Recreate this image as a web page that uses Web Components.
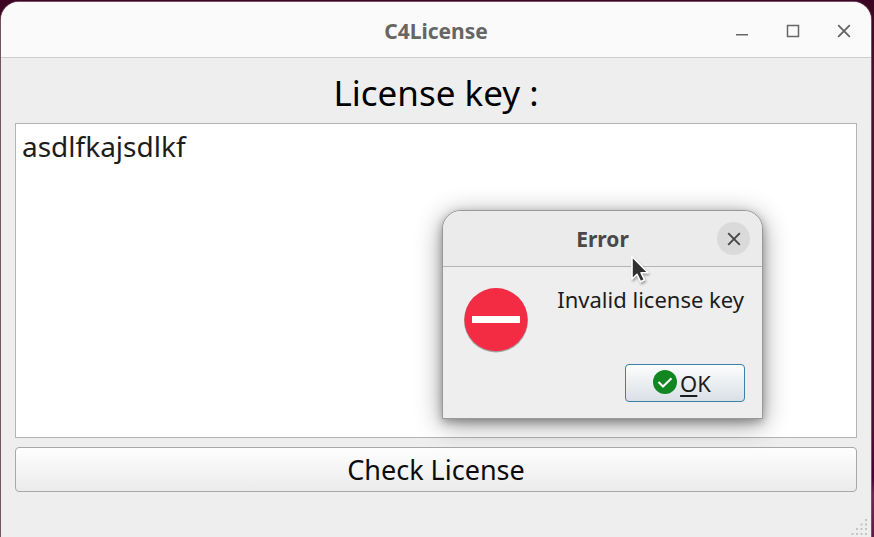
<!DOCTYPE html>
<html lang="en">
<head>
<meta charset="utf-8">
<title>C4License</title>
<style>
html, body { height: 100%; }
body {
  margin: 0;
  overflow: hidden;
  font-family: "Noto Sans", "Open Sans", sans-serif;
  color: #1c1c1c;
  background: linear-gradient(#3c0524, #4b1230 15%, #4b1035 80%, #47003c 89%, #6c2858 92%, #5c1a4a);
}
</style>
</head>
<body>
<license-app></license-app>

<template id="app-tpl">
  <style>
    :host { display: block; box-sizing: border-box; height: 100vh; padding: 2px 3px 0 1px; position: relative; }
    app-dialog { position: absolute; left: 442px; top: 210px; width: 321px; }
    mouse-pointer { position: absolute; left: 628px; top: 254px; }
  </style>
  <app-window label="C4License"><license-form></license-form></app-window>
  <app-dialog label="Error">Invalid license key</app-dialog>
  <mouse-pointer></mouse-pointer>
</template>

<template id="window-tpl">
  <style>
    :host {
      display: flex; flex-direction: column; box-sizing: border-box; height: 100%;
      background: #eee; border-radius: 18px 18px 0 0; overflow: hidden;
      box-shadow: 0 0 0 1px #765063;
    }
    header {
      display: grid; grid-template-columns: 1fr auto 1fr; align-items: center;
      box-sizing: border-box; height: 56px; flex: none; padding: 2px 8px 0 8px;
      background: #fafafa; border-bottom: 1px solid #cdcdcd; color: #666;
    }
    h1 { grid-column: 2; margin: 0; font-size: 21px; line-height: 28px; font-weight: 700; }
    nav { display: flex; justify-content: flex-end; gap: 13px; }
    button { width: 38px; height: 38px; padding: 0; border: 0; background: none; color: inherit; display: grid; place-items: center; }
    svg { display: block; }
    ::slotted(*) { flex: 1; min-height: 0; }
  </style>
  <header>
    <h1></h1>
    <nav aria-label="Window controls">
      <button aria-label="Minimize"><svg width="14" height="14" viewBox="0 0 14 14" fill="none" stroke="currentColor" stroke-width="1.6"><path d="M1 10.700h12"/></svg></button>
      <button aria-label="Maximize"><svg width="14" height="14" viewBox="0 0 14 14" fill="none" stroke="currentColor" stroke-width="1.5"><path d="M1.500 1.500h11v11h-11z"/></svg></button>
      <button aria-label="Close"><svg width="14" height="14" viewBox="0 0 14 14" fill="none" stroke="currentColor" stroke-width="1.9"><path d="M1.200 1.200l11.600 11.600M12.800 1.200L1.200 12.800"/></svg></button>
    </nav>
  </header>
  <slot></slot>
</template>

<template id="form-tpl">
  <style>
    :host { display: flex; flex-direction: column; box-sizing: border-box; padding: 10px 14px 0; }
    label { font-size: 35px; line-height: 50px; margin-bottom: 5px; text-align: center; color: #000; }
    textarea {
      flex: 1; min-height: 0; box-sizing: border-box; width: 100%; margin: 0; padding: 4px 6px; resize: none; outline: none;
      border: 1px solid #b4b4b4; background: #fff; color: inherit;
      font-family: inherit; font-size: 28px; line-height: 36px;
    }
    button {
      box-sizing: border-box; height: 45px; flex: none; margin-top: 9px; padding: 0; color: #0c0c0c;
      border: 1px solid #a8a8a8; border-radius: 4px; background: linear-gradient(#fefefe, #ebebeb);
      font-family: inherit; font-size: 27px; line-height: 36px;
    }
    footer { flex: none; height: 45px; display: flex; justify-content: flex-end; align-items: flex-end; margin-right: -12px; }
    svg { display: block; }
  </style>
  <label for="key">License key :</label>
  <textarea id="key" spellcheck="false">asdlfkajsdlkf</textarea>
  <button type="button">Check License</button>
  <footer><svg width="18" height="18" viewBox="0 0 18 18" fill="#c4c4c4" aria-hidden="true">
    <path d="M14 0h2v2h-2zM9.500 4.500h2v2h-2zM14 4.500h2v2h-2zM5 9h2v2H5zM9.500 9h2v2h-2zM14 9h2v2h-2zM.5 14h2v2h-2zM5 14h2v2H5zM9.500 14h2v2h-2zM14 14h2v2h-2z"/></svg></footer>
</template>

<template id="dialog-tpl">
  <style>
    :host {
      display: block; box-sizing: border-box; border: 1px solid #999; border-radius: 19px 19px 0 0;
      background: #eee; box-shadow: 0 3px 8px rgba(0,0,0,.28), 0 5px 26px rgba(0,0,0,.42);
    }
    header {
      display: grid; grid-template-columns: 1fr auto 1fr; align-items: center; box-sizing: border-box; height: 56px;
      padding: 0 12px; border-bottom: 1px solid #b4b4b4; border-radius: 18px 18px 0 0; background: #ebebeb; color: #484848;
    }
    h2 { grid-column: 2; margin: 0; font-size: 21px; line-height: 28px; font-weight: 700; }
    .close { justify-self: end; width: 33px; height: 33px; padding: 0; border: 0; border-radius: 50%; background: #dadada; color: #484848; display: grid; place-items: center; }
    svg { display: block; }
    .message { display: flex; justify-content: space-between; align-items: flex-start; padding: 20px 18px 0 20px; }
    p { margin: 0; font-size: 22px; line-height: 24px; }
    .actions { display: flex; justify-content: flex-end; padding: 11px 17px 16px; }
    .ok {
      display: flex; justify-content: center; align-items: center; gap: 3px; box-sizing: border-box; width: 120px; height: 38px; padding: 0 6px 0 0;
      border: 1px solid #3a80ab; border-radius: 4px; background: linear-gradient(#fcfdfd, #d9e0e5); color: inherit;
      font-family: inherit; font-size: 22px; line-height: 30px;
    }
    u { text-decoration-thickness: 2px; text-underline-offset: 3px; }
  </style>
  <header>
    <h2></h2>
    <button class="close" aria-label="Close"><svg width="14" height="14" viewBox="0 0 14 14" fill="none" stroke="currentColor" stroke-width="1.9"><path d="M1.200 1.200l11.600 11.600M12.800 1.200L1.200 12.800"/></svg></button>
  </header>
  <div class="message">
    <svg width="66" height="66" viewBox="0 0 66 66" aria-hidden="true"><circle cx="33" cy="33.500" r="32" fill="#a4a4a4"/><circle cx="33" cy="32.600" r="31.600" fill="#f42c43"/><path fill="#fff" d="M9 29h48v7H9z"/></svg>
    <p><slot></slot></p>
  </div>
  <div class="actions">
    <button class="ok" type="button"><svg width="24" height="26" viewBox="0 0 24 26" aria-hidden="true"><circle cx="12" cy="12" r="12" fill="#128621"/><path d="M5.500 12l4.500 4.500 8.500-8.300" fill="none" stroke="#fff" stroke-width="2.100"/></svg><span><u>O</u>K</span></button>
  </div>
</template>

<template id="pointer-tpl">
  <style>
    :host { display: block; pointer-events: none; }
    svg { display: block; filter: drop-shadow(1px 2px 1px rgba(0,0,0,.3)); }
  </style>
  <svg width="24" height="32" viewBox="0 0 24 32" aria-hidden="true"><path d="M4 2.500V25l5-4.600 3.600 7.400 4-2-3.500-7H20z" fill="#303030" stroke="#fff" stroke-width="1.600" stroke-linejoin="round"/></svg>
</template>

<script>
class TemplateElement extends HTMLElement {
  constructor() {
    super();
    const tpl = document.getElementById(this.constructor.template);
    this.attachShadow({ mode: 'open' }).append(tpl.content.cloneNode(true));
  }
  connectedCallback() {
    const heading = this.shadowRoot.querySelector('h1, h2');
    if (heading) heading.textContent = this.getAttribute('label');
  }
}
class AppWindow extends TemplateElement { static template = 'window-tpl'; }
class LicenseForm extends TemplateElement { static template = 'form-tpl'; }
class AppDialog extends TemplateElement {
  static template = 'dialog-tpl';
  connectedCallback() {
    super.connectedCallback();
    this.setAttribute('role', 'dialog');
    this.setAttribute('aria-label', this.getAttribute('label'));
  }
}
class MousePointer extends TemplateElement { static template = 'pointer-tpl'; }
class LicenseApp extends TemplateElement { static template = 'app-tpl'; }
customElements.define('app-window', AppWindow);
customElements.define('license-form', LicenseForm);
customElements.define('app-dialog', AppDialog);
customElements.define('mouse-pointer', MousePointer);
customElements.define('license-app', LicenseApp);
</script>
</body>
</html>
